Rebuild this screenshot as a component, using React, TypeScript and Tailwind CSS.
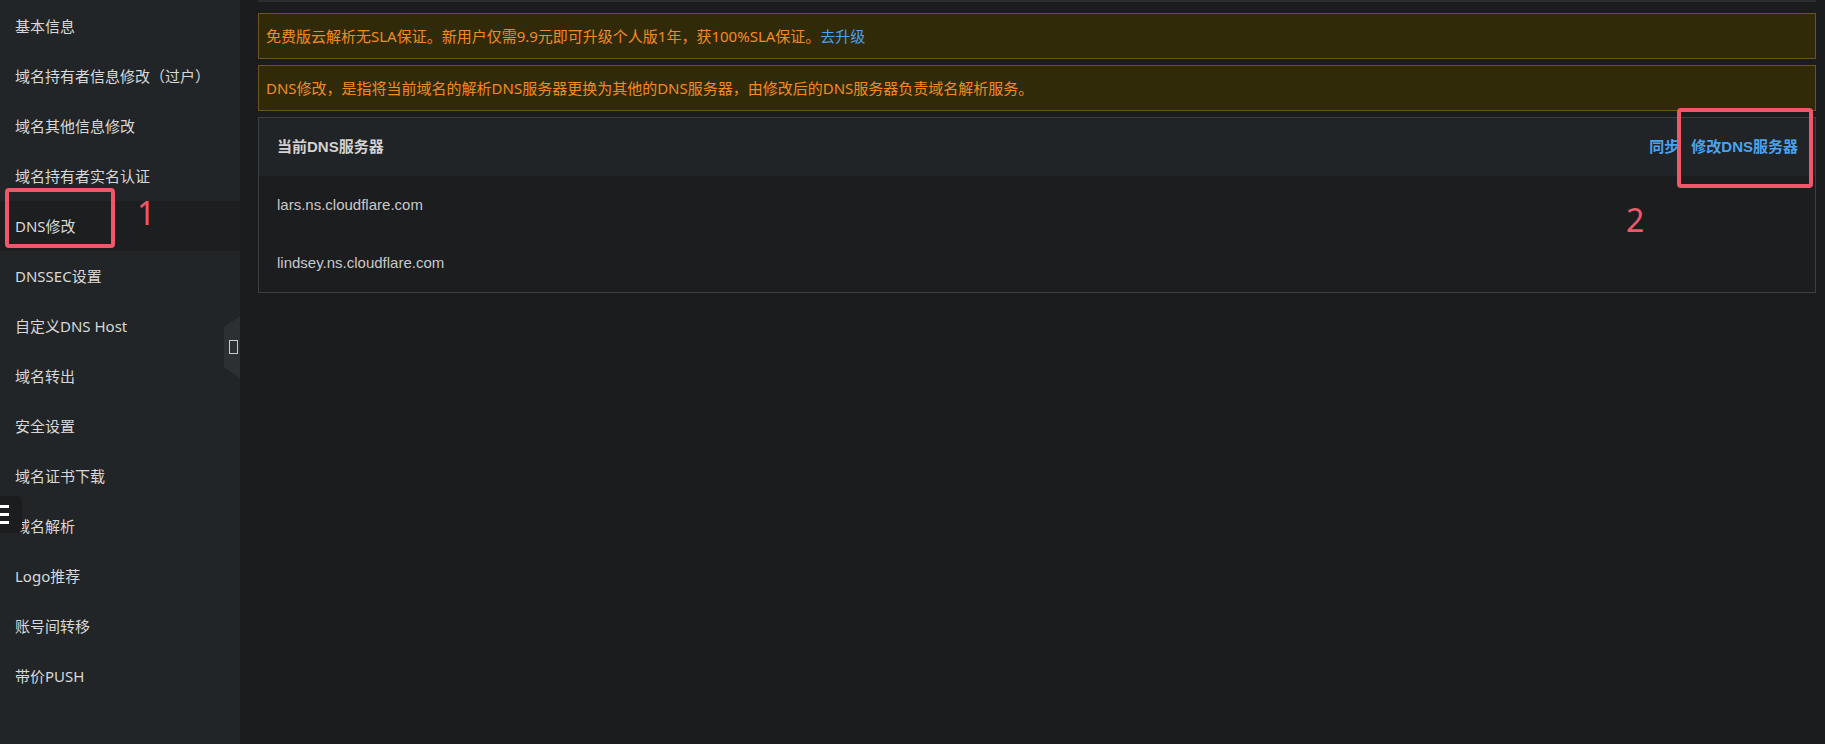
import React from "react";

const menu = [
  "基本信息",
  "域名持有者信息修改（过户）",
  "域名其他信息修改",
  "域名持有者实名认证",
  "DNS修改",
  "DNSSEC设置",
  "自定义DNS Host",
  "域名转出",
  "安全设置",
  "域名证书下载",
  "域名解析",
  "Logo推荐",
  "账号间转移",
  "带价PUSH",
];

const servers = ["lars.ns.cloudflare.com", "lindsey.ns.cloudflare.com"];

export default function App() {
  return (
    <div className="relative flex h-[744px] w-full overflow-hidden bg-[#1b1c1e] font-['Noto_Sans','Noto_Sans_CJK_SC',sans-serif]">
      {/* Sidebar */}
      <aside className="w-[240px] shrink-0 bg-[#222527] pt-[1px]">
        {menu.map((item) => (
          <div
            key={item}
            className={`flex h-[50px] items-center pl-[15px] text-[15px] text-[#d8d8d8] ${
              item === "DNS修改" ? "bg-[#1c1e20]" : ""
            }`}
          >
            {item}
          </div>
        ))}
      </aside>

      {/* Main */}
      <main className="flex-1 pl-[18px] pr-[9px]">
        <div className="h-[2px] bg-[#2b2d30]" />

        <div className="mt-[11px] flex flex-col gap-[6px]">
          <div className="flex h-[46px] items-center border border-[#6b5418] bg-[#312a09] px-[7px] text-[15px] text-[#f38a1f]">
            免费版云解析无SLA保证。新用户仅需9.9元即可升级个人版1年，获100%SLA保证。
            <a className="cursor-pointer text-[#4aa3f0]">去升级</a>
          </div>
          <div className="flex h-[46px] items-center border border-[#6b5418] bg-[#312a09] px-[7px] text-[15px] text-[#f38a1f]">
            DNS修改，是指将当前域名的解析DNS服务器更换为其他的DNS服务器，由修改后的DNS服务器负责域名解析服务。
          </div>
        </div>

        <div className="mt-[6px] border border-[#3c3e41] font-['Liberation_Sans','Noto_Sans_CJK_SC',sans-serif] text-[15px]">
          <div className="flex h-[58px] items-center justify-between bg-[#212426] pl-[18px] pr-[17px]">
            <span className="font-bold text-[#d2d2d2]">当前DNS服务器</span>
            <div className="flex items-center gap-[12px] font-bold text-[#4aa3f0]">
              <a className="cursor-pointer">同步</a>
              <a className="cursor-pointer">修改DNS服务器</a>
            </div>
          </div>
          {servers.map((s) => (
            <div
              key={s}
              className="flex h-[58px] items-center bg-[#1c1d1f] pl-[18px] text-[#c9c9c9]"
            >
              {s}
            </div>
          ))}
        </div>
      </main>

      {/* Sidebar collapse handle */}
      <div className="absolute left-[224px] top-[316px] h-[62px] w-[16px]">
        <svg width="16" height="62" viewBox="0 0 16 62" className="absolute inset-0">
          <polygon points="16,0 0,11 0,51 16,62" fill="#2d3033" />
        </svg>
        <span className="absolute left-[5px] top-[24px] h-[14px] w-[9px] border border-[#c9c9c9]" />
      </div>

      {/* Floating menu toggle */}
      <div className="absolute left-0 top-[496px] flex h-[37px] w-[22px] flex-col justify-center gap-[5px] rounded-r-[5px] bg-[#1b1c1e]">
        <span className="h-[3px] w-[9px] bg-white" />
        <span className="h-[3px] w-[9px] bg-white" />
        <span className="h-[3px] w-[9px] bg-white" />
      </div>

      {/* Annotations */}
      <div className="pointer-events-none absolute left-[5px] top-[188px] h-[60px] w-[110px] rounded-[4px] border-[4px] border-[#f2566b]" />
      <span className="pointer-events-none absolute left-[137px] top-[193px] text-[32px] leading-[40px] text-[#f2566b]">
        1
      </span>
      <div className="pointer-events-none absolute left-[1677px] top-[108px] h-[80px] w-[136px] rounded-[4px] border-[4px] border-[#f2566b]" />
      <span className="pointer-events-none absolute left-[1626px] top-[200px] text-[32px] leading-[40px] text-[#f2566b]">
        2
      </span>
    </div>
  );
}
